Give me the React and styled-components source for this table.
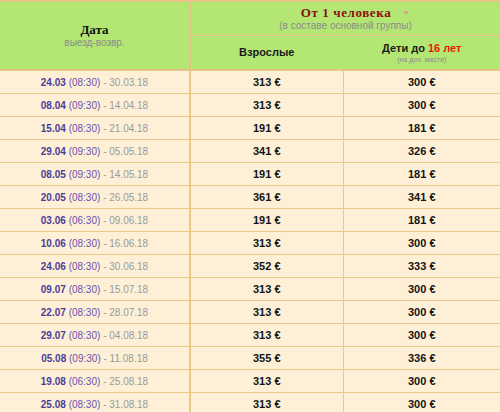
import React from "react";
import styled, { createGlobalStyle } from "styled-components";

const Global = createGlobalStyle`
  html, body { margin: 0; padding: 0; background: #fdf0d6; }
  body { font-family: "Liberation Sans", Arial, sans-serif; }
`;

const Table = styled.table`
  width: 500px;
  border-collapse: collapse;
  table-layout: fixed;
  border-top: 2px solid #e6c487;
`;

const HeadCell = styled.th`
  background: #b3e673;
  padding: 0;
  font-weight: normal;
  text-align: center;
  vertical-align: middle;
  height: ${(p) => p.$h || 33}px;
  border-right: ${(p) => (p.$rb ? `${p.$rb}px solid #e6c487` : "none")};
  border-bottom: ${(p) => (p.$soft ? "1px solid #e8c58e" : "2px solid #e6c487")};
`;

const SerifTitle = styled.div`
  font-family: "Liberation Serif", "Times New Roman", serif;
  font-weight: bold;
  font-size: 13px;
  line-height: 14px;
  letter-spacing: ${(p) => p.$ls || 0}px;
  color: ${(p) => p.$color || "#111"};
  display: flex;
  justify-content: center;
  align-items: center;
`;

const Arrow = styled.span`
  display: inline-block;
  width: 0;
  height: 0;
  border-left: 3.5px solid transparent;
  border-right: 3.5px solid transparent;
  border-top: 4px solid #d6a394;
  margin-left: 12px;
  margin-right: -19px;
  margin-top: 1px;
`;

const Sub = styled.div`
  font-size: ${(p) => p.$size || 10}px;
  line-height: ${(p) => (p.$size ? p.$size + 2 : 12)}px;
  color: ${(p) => p.$color || "#8c8c8c"};
  margin-top: ${(p) => p.$mt || 0}px;
`;

const ColTitle = styled.div`
  font-size: 11px;
  font-weight: bold;
  line-height: 13px;
  color: #1a1a1a;
`;

const Red = styled.span`
  color: #f2140c;
`;

const Row = styled.tr``;

const Cell = styled.td`
  height: 22px;
  padding: 0;
  text-align: center;
  vertical-align: middle;
  font-size: ${(p) => p.$fs || 11}px;
  border-bottom: 1px solid #e8c985;
  border-right: ${(p) => (p.$rb ? `${p.$rb}px solid #e8c985` : "none")};
  background: #fdf0d6;
`;

const Price = styled.span`
  font-weight: bold;
  color: #141414;
`;

const DateStart = styled.span`
  font-weight: bold;
  color: #4b3c98;
`;

const Time = styled.span`
  color: #6852ae;
`;

const DateEnd = styled.span`
  color: #9a9a9a;
`;

const rows = [
  ["24.03", "08:30", "30.03.18", 313, 300],
  ["08.04", "09:30", "14.04.18", 313, 300],
  ["15.04", "08:30", "21.04.18", 191, 181],
  ["29.04", "09:30", "05.05.18", 341, 326],
  ["08.05", "09:30", "14.05.18", 191, 181],
  ["20.05", "08:30", "26.05.18", 361, 341],
  ["03.06", "06:30", "09.06.18", 191, 181],
  ["10.06", "08:30", "16.06.18", 313, 300],
  ["24.06", "08:30", "30.06.18", 352, 333],
  ["09.07", "08:30", "15.07.18", 313, 300],
  ["22.07", "08:30", "28.07.18", 313, 300],
  ["29.07", "08:30", "04.08.18", 313, 300],
  ["05.08", "09:30", "11.08.18", 355, 336],
  ["19.08", "06:30", "25.08.18", 313, 300],
  ["25.08", "08:30", "31.08.18", 313, 300],
];

export default function App() {
  return (
    <>
      <Global />
      <Table>
        <colgroup>
          <col style={{ width: 190 }} />
          <col style={{ width: 153 }} />
          <col style={{ width: 157 }} />
        </colgroup>
        <thead>
          <tr>
            <HeadCell rowSpan={2} $rb={2} $h={67}>
              <SerifTitle>Дата</SerifTitle>
              <Sub>выезд-возвр.</Sub>
            </HeadCell>
            <HeadCell colSpan={2} $soft $h={33}>
              <SerifTitle $color="#8a1010" $ls={0.6}>
                От 1 человека
                <Arrow />
              </SerifTitle>
              <Sub>(в составе основной группы)</Sub>
            </HeadCell>
          </tr>
          <tr>
            <HeadCell $rb={1} $h={33}>
              <ColTitle>Взрослые</ColTitle>
            </HeadCell>
            <HeadCell $h={33}>
              <ColTitle>
                Дети до <Red>16 лет</Red>
              </ColTitle>
              <Sub $size={7}>(на доп. месте)</Sub>
            </HeadCell>
          </tr>
        </thead>
        <tbody>
          {rows.map(([d, t, e, a, c]) => (
            <Row key={d}>
              <Cell $rb={2} $fs={10}>
                <DateStart>{d}</DateStart> <Time>({t})</Time>{" "}
                <DateEnd>- {e}</DateEnd>
              </Cell>
              <Cell $rb={1}>
                <Price>{a} €</Price>
              </Cell>
              <Cell>
                <Price>{c} €</Price>
              </Cell>
            </Row>
          ))}
        </tbody>
      </Table>
    </>
  );
}
